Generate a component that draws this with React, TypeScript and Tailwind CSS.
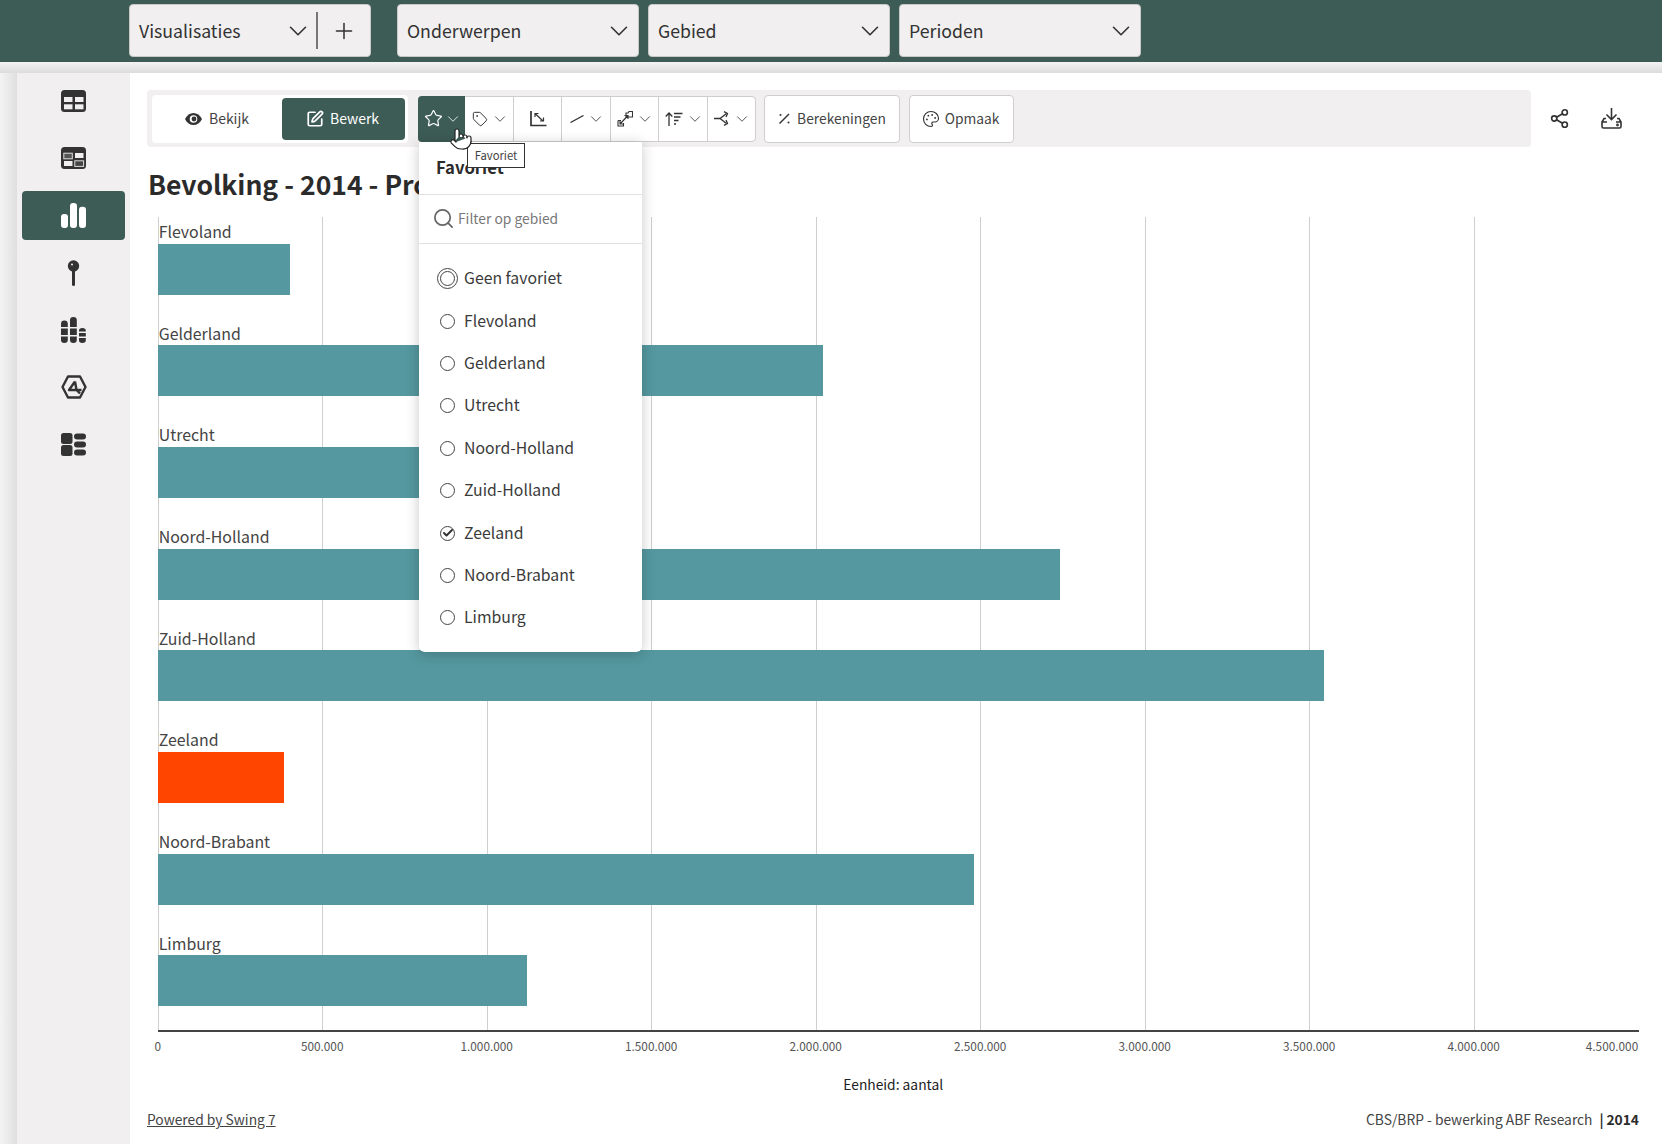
import React from 'react';
import { Check, ChevronDown, Palette, Plus, Search, Share2, SquarePen, Star, Tag, Pointer } from 'lucide-react';

const provinces = [
  { name: 'Flevoland', value: 401000 },
  { name: 'Gelderland', value: 2023000 },
  { name: 'Utrecht', value: 1260000 },
  { name: 'Noord-Holland', value: 2743000 },
  { name: 'Zuid-Holland', value: 3545000 },
  { name: 'Zeeland', value: 385000, highlight: true },
  { name: 'Noord-Brabant', value: 2480000 },
  { name: 'Limburg', value: 1123000 },
];

const ticks = ['0', '500.000', '1.000.000', '1.500.000', '2.000.000', '2.500.000', '3.000.000', '3.500.000', '4.000.000'];

const CHART_WIDTH = 1481;
const CHART_MAX = 4500000;

const HeaderSelect = ({ label }: { label: string }) => (
  <div className="w-[242px] h-[53px] flex items-center justify-between pl-[9px] pr-[4px] rounded-[4px] border border-[#c9c7c8] bg-[#f1eff0] text-[17.700px] leading-[24px] text-[#333]">
    <span className="pb-[2px]">{label}</span>
    <ChevronDown size={30} strokeWidth={1.300} />
  </div>
);

const SideIcon = ({ children, active }: { children: React.ReactNode; active?: boolean }) => (
  <div className={`w-[103px] h-[49px] flex items-center justify-center rounded-[4px] ${active ? 'bg-[#3d5c55]' : ''}`}>
    {children}
  </div>
);

const TableIcon = () => (
  <svg width="25" height="22" viewBox="0 0 25 22">
    <rect width="25" height="22" rx="3.5" fill="#333" />
    <rect x="3" y="7" width="8.5" height="5" fill="#f1eff0" />
    <rect x="14" y="7" width="8.5" height="5" fill="#f1eff0" />
    <rect x="3" y="14.3" width="8.5" height="5" fill="#f1eff0" />
    <rect x="14" y="14.3" width="8.5" height="5" fill="#f1eff0" />
  </svg>
);

const PivotIcon = () => (
  <svg width="25" height="22" viewBox="0 0 25 22">
    <rect width="25" height="22" rx="3.5" fill="#333" />
    <rect x="2.8" y="6.2" width="8.5" height="5.6" fill="#555" stroke="#ddd" strokeWidth="1" />
    <rect x="14" y="6" width="8.5" height="5" fill="#f1eff0" />
    <rect x="3" y="14" width="8.5" height="5" fill="#f1eff0" />
    <rect x="13.8" y="13.8" width="8.8" height="5.6" fill="#444" stroke="#ddd" strokeWidth="1" />
  </svg>
);

const BarsIcon = () => (
  <svg width="25" height="25" viewBox="0 0 25 25" fill="#fff">
    <rect x="0" y="11" width="7" height="14" rx="3" />
    <rect x="9" y="0" width="7" height="25" rx="3" />
    <rect x="18" y="3.7" width="7" height="21.3" rx="3" />
  </svg>
);

const PinIcon = () => (
  <svg width="13" height="26" viewBox="0 0 13 26">
    <rect x="5" y="8" width="3" height="18" rx="1.5" fill="#333" />
    <circle cx="6.5" cy="6" r="5.7" fill="#333" />
    <circle cx="5" cy="4.5" r="1" fill="#eee" />
  </svg>
);

const StackIcon = () => (
  <svg width="25" height="26" viewBox="0 0 25 26" fill="#333">
    <path d="M0 7a3 3 0 0 1 6.8 0v3H0zM0 11.5h6.8v6.5H0zM0 19.5h6.8V23a3.4 3 0 0 1-6.8 0z" />
    <path d="M9 3a3.4 3 0 0 1 6.8 0v7H9zM9 11.5h6.8v6.5H9zM9 19.5h6.8V23a3.4 3 0 0 1-6.8 0z" />
    <path d="M18 13.5a3.4 2.5 0 0 1 6.8 0v1H18zM18 16h6.8v3.5H18zM18 21h6.8v2.5a3.4 2.5 0 0 1-6.8 0z" />
  </svg>
);

const HexIcon = () => (
  <svg width="26" height="24" viewBox="0 0 26 24" fill="none" stroke="#333" strokeWidth="2.4" strokeLinejoin="round">
    <path d="M7 1.5h12l5.5 10.5L19 22.5H7L1.5 12z" />
    <path d="M14 6.5 8 15h12.5M14 6.5l1.5 8.5 3.5 3.5" />
  </svg>
);

const TilesIcon = () => (
  <svg width="25" height="23" viewBox="0 0 25 23" fill="#333">
    <rect x="0" y="0" width="11.5" height="11" rx="2.5" />
    <rect x="0" y="12" width="11.5" height="11" rx="2.5" />
    <rect x="13" y="0.5" width="12" height="6" rx="3" />
    <rect x="13" y="8.5" width="12" height="6" rx="3" />
    <rect x="13" y="16.5" width="12" height="6" rx="3" />
  </svg>
);

const EyeIcon = () => (
  <svg width="19" height="14" viewBox="0 0 18 14">
    <path d="M0.5 7C2.5 3 5.5 1 9 1s6.500 2 8.500 6c-2 4-5 6-8.500 6S2.500 11 0.500 7z" fill="#333" />
    <circle cx="9" cy="7" r="3.800" fill="#fff" />
    <circle cx="9.500" cy="7" r="2.400" fill="#333" />
  </svg>
);

const AxisIcon = () => (
  <svg width="18" height="18" viewBox="0 0 18 18" fill="none" stroke="#333" strokeWidth="1.200">
    <path d="M1 1v14.500h15.500" strokeWidth="1.700" />
    <path d="M5 3.500l8 7.500M5 7V3.500h3.500M13.500 7.500v3.500H10" />
  </svg>
);

const LineIcon = () => (
  <svg width="14" height="8" viewBox="0 0 14 8" fill="none" stroke="#333" strokeWidth="1.300">
    <path d="M0.500 7.500 13.500 0.500" />
  </svg>
);

const ExpandIcon = () => (
  <svg width="16" height="16" viewBox="0 0 16 16" fill="none" stroke="#333" strokeWidth="1.100">
    <path d="M1 9.500h3M1 9.500v5.500h5.500v-3" />
    <path d="M9 6V2h2l1-1.500h3.500V6z" />
    <path d="M3 13 11 4.500M7.500 4.500H11V8M3 9.500V13h3.500" />
  </svg>
);

const SortIcon = () => (
  <svg width="18" height="14" viewBox="0 0 18 14" fill="none" stroke="#333" strokeWidth="1.300">
    <path d="M4 14V1M0.700 4.500 4 1l3.300 3.500" />
    <path d="M9 1.500h8.500M9 5h6.500M9 8.500h4.500M9 12h2" />
  </svg>
);

const SplitIcon = () => (
  <svg width="16" height="15" viewBox="0 0 16 15" fill="none" stroke="#333" strokeWidth="1.300">
    <path d="M0 7.500h6l6.500-5M6 7.500l6.500 5" />
    <path d="M10 0.700l3.500 1.800-1.500 3.500M10 14.300l3.500-1.800-1.500-3.500" />
  </svg>
);

const PercentMark = () => (
  <svg width="13" height="13" viewBox="0 0 13 13" fill="#333" stroke="#333">
    <path d="M1.500 11.500 11 2" strokeWidth="1.400" fill="none" />
    <circle cx="2.500" cy="3" r="1" stroke="none" />
    <circle cx="10.500" cy="10.500" r="1" stroke="none" />
  </svg>
);

const DownloadIcon = () => (
  <svg width="21" height="21" viewBox="0 2 21 21" fill="none" stroke="#333" strokeWidth="1.600">
    <path d="M10.500 2v11.500M5.500 8.500l5 5 5-5" />
    <path d="M5 12.500H3L1 16v4.500a1.500 1.500 0 0 0 1.500 1.500h16a1.500 1.500 0 0 0 1.500-1.500V16l-2-3.500h-2M1 16h5M15 16h5" />
    <circle cx="16.500" cy="19" r="0.600" fill="#333" />
  </svg>
);

const ToolButton = ({ children, last }: { children: React.ReactNode; last?: boolean }) => (
  <div className={`h-full flex items-center justify-center gap-[3px] pl-[3px] ${last ? 'flex-1' : 'w-[48.500px] border-r border-[#cfcdce]'}`}>
    {children}
  </div>
);

const SmallChevron = ({ color = '#333' }: { color?: string }) => (
  <ChevronDown size={18} strokeWidth={1.100} color={color} />
);

const radioItems = ['Geen favoriet', 'Flevoland', 'Gelderland', 'Utrecht', 'Noord-Holland', 'Zuid-Holland', 'Zeeland', 'Noord-Brabant', 'Limburg'];

const FavoriteDropdown = () => (
  <div className="absolute left-[1px] top-full z-20 w-[223px] h-[510px] bg-white rounded-b-[6px] shadow-[0_2px_14px_rgba(0,0,0,0.22)]">
    <div className="h-[53px] pl-[17px] pt-[13px] border-b border-[#e2e0e1] text-[16.700px] leading-[24px] font-bold text-[#2b2b2b]">Favoriet</div>
    <div className="h-[49px] flex items-center pl-[13px] gap-[3px] border-b border-[#e2e0e1] text-[13.800px] leading-[20px] text-[#777]">
      <Search size={23} strokeWidth={1.800} color="#666" className="shrink-0" />
      <span className="pb-[1px]">Filter op gebied</span>
    </div>
    <div className="pt-[14px] flex flex-col">
      {radioItems.map((item) => (
        <div key={item} className="h-[42.400px] flex items-center pl-[21px] gap-[9px] text-[15.800px] leading-[24px] text-[#3a3a3a]">
          <span className={`w-[15px] h-[15px] rounded-full border border-[#444] flex items-center justify-center ${item === 'Geen favoriet' ? 'outline outline-[#444] outline-offset-[2px]' : ''}`}>
            {item === 'Zeeland' && <Check size={12} strokeWidth={4} color="#333" />}
          </span>
          <span className="pb-[1px]">{item}</span>
        </div>
      ))}
    </div>
  </div>
);

export default function App() {
  return (
    <div className="w-[1662px] h-[1144px] overflow-hidden flex flex-col bg-white font-['Noto_Sans_CJK_SC',sans-serif]">
      {/* top bar */}
      <div className="h-[62px] shrink-0 bg-[#3d5c55] flex items-start pt-[4px] pl-[129px]">
        <div className="w-[242px] h-[53px] flex items-center pl-[9px] rounded-[4px] border border-[#c9c7c8] bg-[#f1eff0] text-[17.700px] leading-[24px] text-[#333]">
          <span className="w-[144px] pb-[2px]">Visualisaties</span>
          <ChevronDown size={30} strokeWidth={1.300} />
          <div className="w-[2px] h-[37px] bg-[#777] ml-[3px]" />
          <Plus size={26} strokeWidth={1.400} className="ml-[13px]" />
        </div>
        <div className="ml-[26px] flex gap-[9px]">
          <HeaderSelect label="Onderwerpen" />
          <HeaderSelect label="Gebied" />
          <HeaderSelect label="Perioden" />
        </div>
      </div>
      <div className="h-[11px] shrink-0 bg-linear-to-b from-[#f4f4f4] to-[#dcdcdc]" />

      <div className="flex-1 flex min-h-0">
        <div className="w-[17px] shrink-0 bg-linear-to-r from-[#f5f4f4] to-[#e0dfdf]" />

        {/* sidebar */}
        <div className="w-[113px] shrink-0 bg-[#f1eff0] flex flex-col items-center pt-[3.500px] gap-[8.200px]">
          <SideIcon><TableIcon /></SideIcon>
          <SideIcon><PivotIcon /></SideIcon>
          <SideIcon active><BarsIcon /></SideIcon>
          <SideIcon><PinIcon /></SideIcon>
          <SideIcon><StackIcon /></SideIcon>
          <SideIcon><HexIcon /></SideIcon>
          <SideIcon><TilesIcon /></SideIcon>
        </div>

        {/* main */}
        <div className="flex-1 pl-[17px] pt-[17px] text-[#333]">
          <div className="flex items-center">
            <div className="w-[1384px] h-[57px] rounded-[4px] bg-[#f1eff0] flex items-center pl-[5px]">
              <div className="w-[256px] h-[48px] bg-white rounded-[4px] flex items-center pl-[3px] pr-[3px] text-[14px] leading-[20px]">
                <div className="w-[127px] flex items-center justify-center gap-[6px] pr-[4px] text-[#444]">
                  <EyeIcon />
                  <span className="pb-[1px]">Bekijk</span>
                </div>
                <div className="flex-1 h-[42px] rounded-[4px] bg-[#3d5c55] text-white flex items-center justify-center gap-[6px] pr-[2px]">
                  <SquarePen size={18} strokeWidth={2.300} />
                  <span className="pb-[1px]">Bewerk</span>
                </div>
              </div>
              <div className="ml-[10px] w-[337.500px] h-[46px] rounded-[4px] border border-[#cfcdce] bg-white flex items-center text-[14px]">
                <div className="relative w-[47px] -ml-px h-[46px] shrink-0 rounded-[4px] rounded-r-none bg-[#3d5c55] flex items-center justify-center gap-[1px] pl-[2px]">
                  <Star size={19} strokeWidth={1.500} color="#fff" />
                  <SmallChevron color="#fff" />
                  <FavoriteDropdown />
                  <div className="absolute left-[49px] top-[47px] z-30 w-[58px] h-[25px] bg-white border border-[#333] flex items-center justify-center text-[11.300px] leading-[16px] text-[#444]">Favoriet</div>
                  <Pointer size={24} strokeWidth={1.200} fill="#fff" color="#222" className="absolute left-[31px] top-[31px] z-40" />
                </div>
                <ToolButton><Tag size={16} strokeWidth={1.500} color="#333" /><SmallChevron /></ToolButton>
                <ToolButton><AxisIcon /></ToolButton>
                <ToolButton><LineIcon /><SmallChevron /></ToolButton>
                <ToolButton><ExpandIcon /><SmallChevron /></ToolButton>
                <ToolButton><SortIcon /><SmallChevron /></ToolButton>
                <ToolButton last><SplitIcon /><SmallChevron /></ToolButton>
              </div>
              <div className="ml-[8.500px] w-[136px] h-[48px] rounded-[4px] border border-[#cfcdce] bg-white flex items-center justify-center gap-[6px] text-[13.800px] leading-[20px] text-[#444]">
                <PercentMark />
                <span className="pb-[1px]">Berekeningen</span>
              </div>
              <div className="ml-[9px] w-[105px] h-[48px] rounded-[4px] border border-[#cfcdce] bg-white flex items-center justify-center gap-[5px] pr-[2px] text-[13.800px] leading-[20px] text-[#444]">
                <Palette size={18} strokeWidth={1.500} color="#333" />
                <span className="pb-[1px]">Opmaak</span>
              </div>
            </div>
            <Share2 size={21} strokeWidth={1.900} color="#333" className="ml-[18px]" />
            <div className="ml-[31px]"><DownloadIcon /></div>
          </div>

          <div className="h-[70px] flex items-center pt-[3px] pl-[1px] text-[26.500px] leading-[36px] font-bold text-[#2b2b2b]">
            Bevolking - 2014 - Provincie
          </div>

          {/* chart */}
          <div className="ml-[10.700px] w-[1481px]">
            <div className="relative flex flex-col gap-[24px] pb-[24px] border-b-2 border-[#444]">
              <div className="absolute inset-0 flex">
                {ticks.map((t) => (
                  <div key={t} className="w-[164.500px] h-full border-l border-[#cfcfcf]" />
                ))}
              </div>
              {provinces.map((p) => (
                <div key={p.name} className="relative">
                  <div className="h-[26.670px] pl-[1px] text-[15.900px] leading-[30px] text-[#444]">{p.name}</div>
                  <div
                    className={`h-[51px] ${p.highlight ? 'bg-[#ff4500]' : 'bg-[#55989f]'}`}
                    style={{ width: (p.value / CHART_MAX) * CHART_WIDTH }}
                  />
                </div>
              ))}
            </div>
            <div className="flex -ml-[82.250px] pt-[5px] text-[11.800px] leading-[18px] text-[#555]">
              {ticks.map((t) => (
                <div key={t} className="w-[164.500px] shrink-0 text-center">{t}</div>
              ))}
              <div className="w-[82.250px] shrink-0 text-right">4.500.000</div>
            </div>
            <div className="pt-[19px] pr-[10px] text-center text-[13.800px] leading-[20px] text-[#222]">Eenheid: aantal</div>
          </div>

          <div className="w-[1492px] mt-[15px] flex justify-between text-[13.800px] leading-[20px] text-[#444]">
            <span className="underline">Powered by Swing 7</span>
            <span>
              CBS/BRP - bewerking ABF Research <span className="ml-[4px] font-bold text-[#2b2b2b]">|&#8201;2014</span>
            </span>
          </div>
        </div>
      </div>
    </div>
  );
}
